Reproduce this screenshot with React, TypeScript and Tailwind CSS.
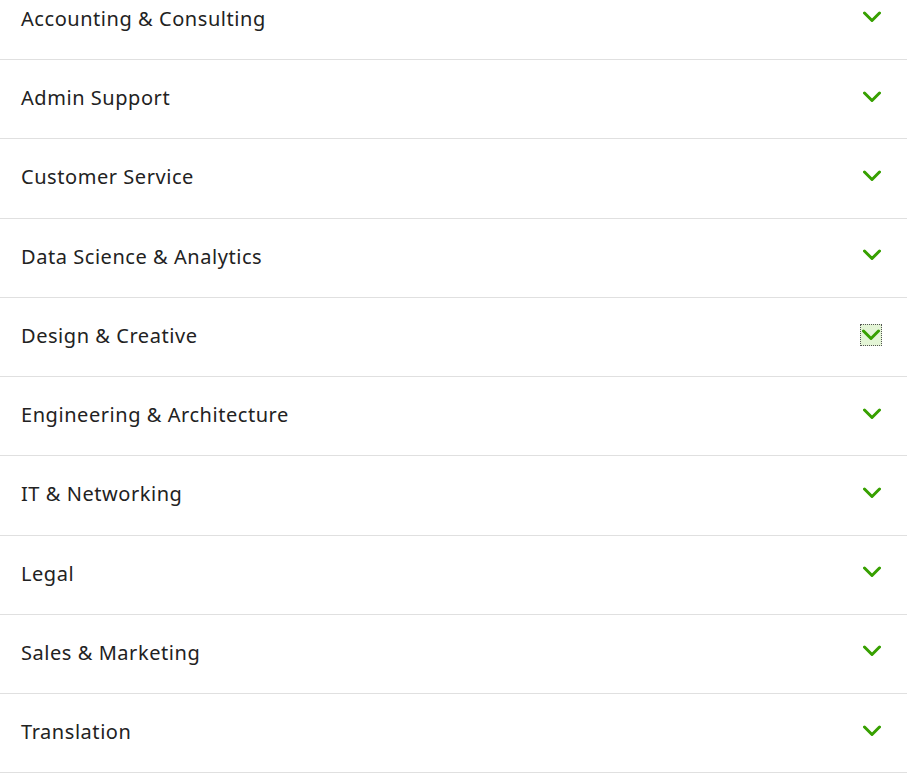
import React from "react";

const items = [
  "Accounting & Consulting",
  "Admin Support",
  "Customer Service",
  "Data Science & Analytics",
  "Design & Creative",
  "Engineering & Architecture",
  "IT & Networking",
  "Legal",
  "Sales & Marketing",
  "Translation",
];

function Chevron() {
  return (
    <svg width="18" height="12" viewBox="0 0 18 12" fill="none">
      <path d="M1.5 2 L9 9.5 L16.5 2" stroke="#37a000" strokeWidth="3" strokeLinecap="round" strokeLinejoin="round" />
    </svg>
  );
}

export default function App() {
  return (
    <div className="bg-white min-h-screen overflow-hidden" style={{ fontFamily: '"Noto Sans", sans-serif' }}>
      <div className="-mt-[19.25px]">
        {items.map((label, i) => (
          <div key={label} className="h-[79.25px] border-b border-[#e0e0e0] flex items-center justify-between pl-[21px] pr-[26px]">
            <span className="text-[20px] text-[#222] tracking-[0.55px] -mt-[2px]">{label}</span>
            {i === 4 ? (
              <span className="w-[22px] h-[22px] -mr-[1px] -mt-[4px] flex items-center justify-center bg-[#e4f5d6] border border-dotted border-[#555]">
                <Chevron />
              </span>
            ) : (
              <span className="-mt-[5px] flex">
                <Chevron />
              </span>
            )}
          </div>
        ))}
      </div>
    </div>
  );
}
